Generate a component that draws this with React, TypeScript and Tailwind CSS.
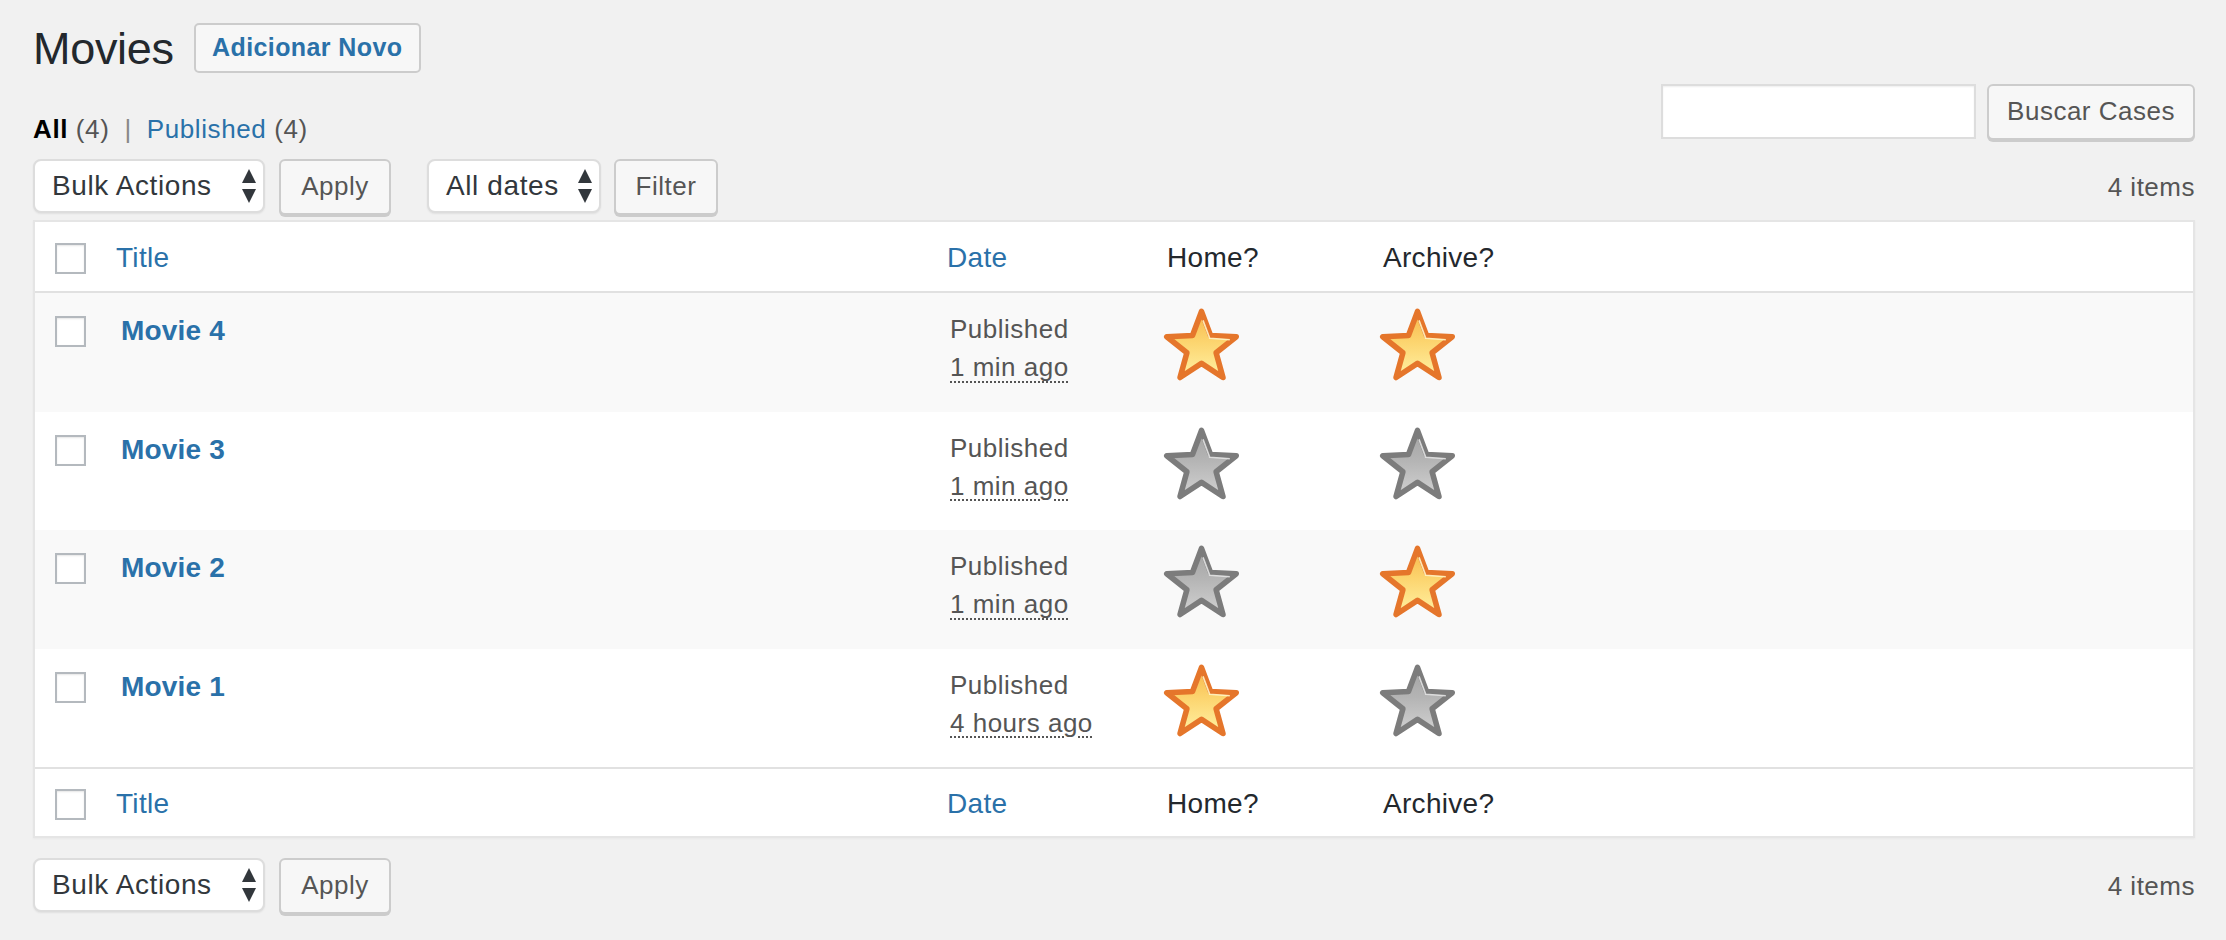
import { useId } from "react";

type Movie = {
  title: string;
  when: string;
  home: boolean;
  archive: boolean;
};

const movies: Movie[] = [
  { title: "Movie 4", when: "1 min ago", home: true, archive: true },
  { title: "Movie 3", when: "1 min ago", home: false, archive: false },
  { title: "Movie 2", when: "1 min ago", home: false, archive: true },
  { title: "Movie 1", when: "4 hours ago", home: true, archive: false },
];

const STAR_POINTS =
  "50,6 62.1,38.3 96.6,39.9 69.6,61.4 78.8,94.6 50,75.6 21.2,94.6 30.4,61.4 3.4,39.9 37.9,38.3";

function Star({ on }: { on: boolean }) {
  const id = useId().replace(/:/g, "");
  const stroke = on ? "#e5762b" : "#7c7c7c";
  return (
    <svg width="79" height="76" viewBox="-3 0 106 102" className="block">
      <defs>
        <linearGradient id={`g${id}`} x1="0" y1="0" x2="0" y2="1">
          <stop offset="0" stopColor={on ? "#f7b64a" : "#a3a3a3"} />
          <stop offset="0.45" stopColor={on ? "#fcd46e" : "#b4b4b4"} />
          <stop offset="1" stopColor={on ? "#fff1a3" : "#d2d2d2"} />
        </linearGradient>
      </defs>
      <polygon
        points={STAR_POINTS}
        fill={`url(#g${id})`}
        stroke={stroke}
        strokeWidth="7.5"
        strokeLinejoin="round"
      />
      {/* little bevel highlight on the upper right arm */}
      <polyline
        points="52,18 61,42 88,44"
        fill="none"
        stroke={on ? "#fff4c4" : "#e2e2e2"}
        strokeWidth="2.2"
        strokeLinejoin="round"
        opacity="0.9"
      />
    </svg>
  );
}

function Checkbox() {
  return (
    <span className="block h-[31px] w-[31px] border-2 border-[#b4b9be] bg-white shadow-[inset_0_1px_2px_rgba(0,0,0,0.1)]" />
  );
}

function Select({ label, width }: { label: string; width: string }) {
  return (
    <div
      className={`${width} flex h-[54px] items-center justify-between rounded-[8px] border-2 border-[#ddd] bg-white pl-[17px] pr-[6px] text-[28px] tracking-[0.6px] text-[#32373c] shadow-[0_1px_2px_rgba(0,0,0,0.07)]`}
    >
      <span>{label}</span>
      <svg width="16" height="38" viewBox="0 0 16 38">
        <polygon points="8,2 15,16 1,16" fill="#32373c" />
        <polygon points="1,22 15,22 8,36" fill="#32373c" />
      </svg>
    </div>
  );
}

function Button({ label, width }: { label: string; width: string }) {
  return (
    <button
      className={`${width} h-[56px] rounded-[6px] border-2 border-[#ccc] bg-[#f7f7f7] pb-[2px] text-[26px] tracking-[0.5px] text-[#555] shadow-[0_2px_0_#ccc]`}
    >
      {label}
    </button>
  );
}

function HeadRow({ footer }: { footer?: boolean }) {
  return (
    <div
      className={`grid grid-cols-[71px_830px_220px_216px_1fr] items-center text-[28px] tracking-[0.3px] ${
        footer ? "h-[69px] border-t-2 border-[#e1e1e1]" : "h-[71px] border-b-2 border-[#e1e1e1]"
      }`}
    >
      <div className="pl-[20px] pt-[4px]">
        <Checkbox />
      </div>
      <div className="pl-[10px] pt-[3px] text-[#2a71a9]">Title</div>
      <div className="pl-[11px] pt-[3px] text-[#2a71a9]">Date</div>
      <div className="pl-[11px] pt-[3px] text-[#23282d]">Home?</div>
      <div className="pl-[11px] pt-[3px] text-[#23282d]">Archive?</div>
    </div>
  );
}

function Row({ movie, striped }: { movie: Movie; striped: boolean }) {
  return (
    <div
      className={`grid h-[118.5px] grid-cols-[71px_830px_220px_216px_1fr] items-start ${
        striped ? "bg-[#f9f9f9]" : "bg-white"
      }`}
    >
      <div className="pl-[20px] pt-[23px]">
        <Checkbox />
      </div>
      <div className="pl-[15px] pt-[20px] text-[28px] font-bold leading-[36px] tracking-[0.2px] text-[#2a71a9]">
        {movie.title}
      </div>
      <div className="pl-[14px] pt-[17px] text-[26px] leading-[38px] tracking-[0.5px] text-[#555]">
        <div>Published</div>
        <div>
          <span className="underline decoration-dotted decoration-2 underline-offset-[5px]">
            {movie.when}
          </span>
        </div>
      </div>
      <div className="pl-[6px] pt-[14px]">
        <Star on={movie.home} />
      </div>
      <div className="pl-[6px] pt-[14px]">
        <Star on={movie.archive} />
      </div>
    </div>
  );
}

export default function App() {
  return (
    <div className="min-h-screen bg-[#f1f1f1] pl-[33px] pr-[31px] pt-[23px] font-['Liberation_Sans',Arial,sans-serif]">
      {/* Page title */}
      <div className="flex h-[50px] items-center gap-[20px]">
        <h1 className="text-[45px] leading-none tracking-[-0.3px] text-[#23282d]">Movies</h1>
        <button className="h-[50px] w-[227px] rounded-[5px] border-2 border-[#ccc] bg-[#f7f7f7] text-[25px] font-bold tracking-[0.4px] text-[#2a71a9]">
          Adicionar Novo
        </button>
      </div>

      {/* Views + search */}
      <div className="mt-[11px] flex h-[57px] items-end justify-between">
        <div className="mb-[-3px] text-[26px] leading-[30px] tracking-[0.6px] text-[#555]">
          <span className="font-bold text-black">All</span> (4)
          <span className="mx-[15px] text-[#888]">|</span>
          <span className="text-[#2a71a9]">Published</span> (4)
        </div>
        <div className="flex items-start gap-[11px] self-start">
          <div className="h-[55px] w-[315px] border-2 border-[#ddd] bg-white shadow-[inset_0_1px_2px_rgba(0,0,0,0.07)]" />
          <Button label="Buscar Cases" width="w-[208px]" />
        </div>
      </div>

      {/* Top tablenav */}
      <div className="mt-[18px] flex h-[56px] items-start justify-between">
        <div className="flex items-start">
          <Select label="Bulk Actions" width="w-[232px]" />
          <div className="ml-[14px]">
            <Button label="Apply" width="w-[112px]" />
          </div>
          <div className="ml-[36px]">
            <Select label="All dates" width="w-[174px]" />
          </div>
          <div className="ml-[13px]">
            <Button label="Filter" width="w-[104px]" />
          </div>
        </div>
        <div className="pt-[9px] text-[26px] tracking-[0.5px] text-[#555]">4 items</div>
      </div>

      {/* Table */}
      <div className="mt-[5px] border-2 border-[#e5e5e5] bg-white shadow-[0_1px_2px_rgba(0,0,0,0.04)]">
        <HeadRow />
        {movies.map((m, i) => (
          <Row key={m.title} movie={m} striped={i % 2 === 0} />
        ))}
        <HeadRow footer />
      </div>

      {/* Bottom tablenav */}
      <div className="mt-[20px] flex h-[56px] items-start justify-between">
        <div className="flex items-start">
          <Select label="Bulk Actions" width="w-[232px]" />
          <div className="ml-[14px]">
            <Button label="Apply" width="w-[112px]" />
          </div>
        </div>
        <div className="pt-[9px] text-[26px] tracking-[0.5px] text-[#555]">4 items</div>
      </div>
    </div>
  );
}
